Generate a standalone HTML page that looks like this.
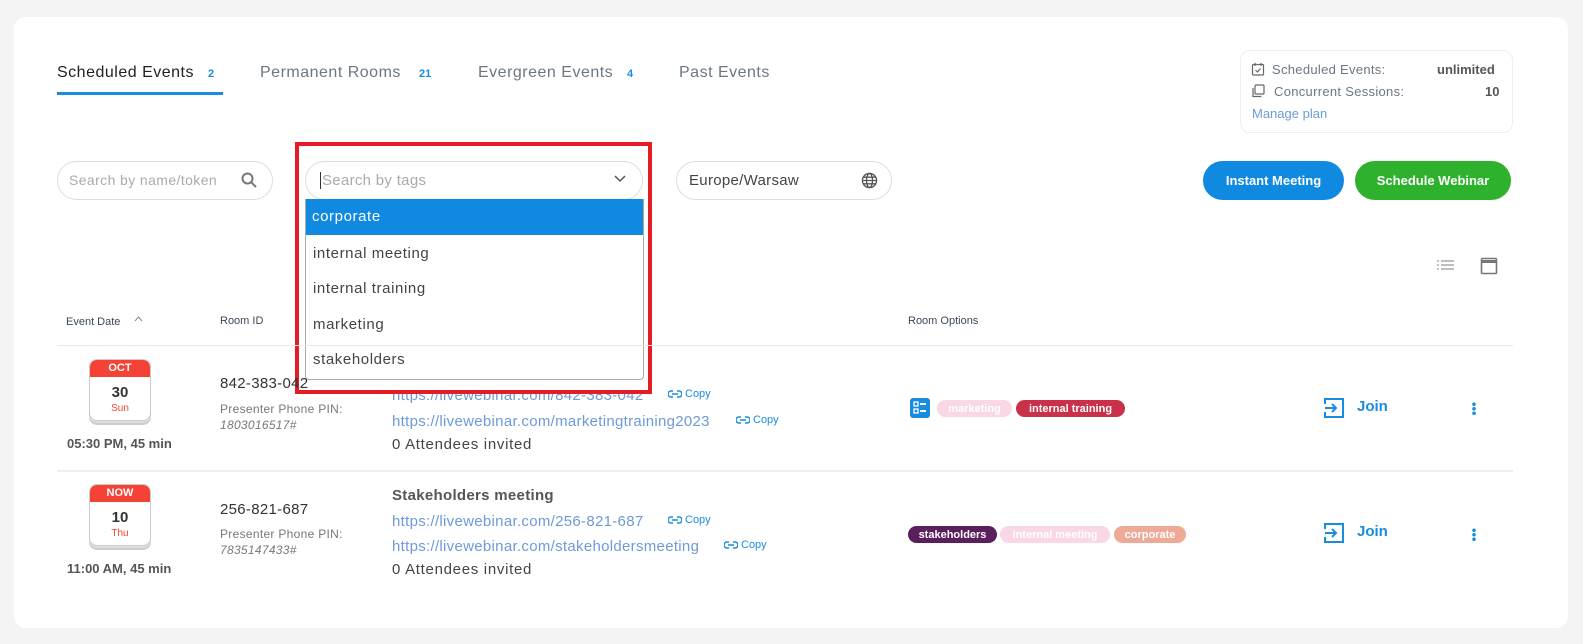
<!DOCTYPE html><html><head><style>
*{box-sizing:border-box;margin:0;padding:0}
body{width:1583px;height:644px;background:#f4f4f4;font-family:"Liberation Sans",sans-serif;position:relative;overflow:hidden;color:#3c4858}
.a{position:absolute;white-space:nowrap}
.card{position:absolute;left:14px;top:17px;width:1554px;height:611px;background:#fff;border-radius:12px}
.tab{font-size:16px;color:#6b7785;letter-spacing:.5px}
.cnt{font-size:11px;color:#1a8ce0;font-weight:bold}
.inp{position:absolute;height:39px;border:1px solid #ddd;border-radius:20px;background:#fff}
.btn{position:absolute;height:39px;border-radius:20px;color:#fff;font-weight:bold;font-size:13px;text-align:center;line-height:39px}
.hd{font-size:11px;color:#3c4858}
.link{font-size:15px;color:#6d9ad8;letter-spacing:.3px}
.copy{font-size:11px;color:#1a8ce0;display:flex;align-items:center;gap:3px}
.tag{position:absolute;height:17px;border-radius:9px;color:#fff;font-size:11px;font-weight:bold;display:flex;align-items:center;justify-content:center}
.cal{position:absolute;width:62px;height:62px;border:1px solid #ccc;border-radius:8px;background:#fff;box-shadow:0 2px 0 #ddd,0 4px 0 #ccc;overflow:hidden;text-align:center}
.cal .t{background:#f44336;color:#fff;font-size:11px;font-weight:bold;height:17px;line-height:17px}
.cal .d{font-size:15px;font-weight:bold;color:#333;margin-top:7px}
.cal .w{font-size:10px;color:#f44336;margin-top:2px}
.opt{position:absolute;left:307px;width:336px;height:36px;line-height:36px;padding-left:6px;font-size:15px;color:#444;letter-spacing:.6px}
.att{font-size:15px;color:#444;letter-spacing:.7px}
</style></head><body>
<div class="card"></div>
<div class="a tab" style="left:57px;top:64px;color:#222">Scheduled Events</div><div class="a cnt" style="left:208px;top:68px">2</div>
<div class="a" style="left:57px;top:92px;width:166px;height:3px;background:#1a8ce0"></div>
<div class="a tab" style="left:260px;top:64px">Permanent Rooms</div><div class="a cnt" style="left:419px;top:68px">21</div>
<div class="a tab" style="left:478px;top:64px">Evergreen Events</div><div class="a cnt" style="left:627px;top:68px">4</div>
<div class="a tab" style="left:679px;top:64px">Past Events</div>

<div class="a" style="left:1240px;top:50px;width:273px;height:83px;border:1px solid #eee;border-radius:10px"></div>
<svg class="a" style="left:1251px;top:62px" width="14" height="14" viewBox="0 0 14 14" fill="none" stroke="#666" stroke-width="1.2"><rect x="1.5" y="2.5" width="11" height="10.5" rx="1"/><path d="M4 1v3M10 1v3M4.5 8l2 2 3-3.5"/></svg>
<div class="a" style="left:1272px;top:62px;font-size:13px;color:#6b7785;letter-spacing:.3px">Scheduled Events:</div>
<div class="a" style="left:1437px;top:62px;font-size:13px;color:#555;font-weight:bold">unlimited</div>
<svg class="a" style="left:1251px;top:84px" width="14" height="14" viewBox="0 0 14 14" fill="none" stroke="#666" stroke-width="1.2"><rect x="4" y="1" width="9" height="9" rx="1"/><path d="M2 4v8.5h8.5"/></svg>
<div class="a" style="left:1274px;top:84px;font-size:13px;color:#6b7785;letter-spacing:.3px">Concurrent Sessions:</div>
<div class="a" style="left:1485px;top:84px;font-size:13px;color:#555;font-weight:bold">10</div>
<div class="a" style="left:1252px;top:106px;font-size:13px;color:#6d9ad8">Manage plan</div>

<div class="inp" style="left:57px;top:161px;width:216px"></div>
<div class="a" style="left:69px;top:172px;font-size:14px;color:#aaa;width:160px;overflow:hidden;letter-spacing:.4px">Search by name/token</div>
<svg class="a" style="left:240px;top:171px" width="18" height="18" viewBox="0 0 18 18" fill="none" stroke="#777" stroke-width="2"><circle cx="7.5" cy="7.5" r="5"/><path d="M11 11l5 5"/></svg>

<div class="inp" style="left:305px;top:161px;width:338px"></div>
<div class="a" style="left:320px;top:172px;font-size:15px;color:#aaa;border-left:1px solid #333;padding-left:1px;letter-spacing:.3px">Search by tags</div>
<svg class="a" style="left:613px;top:174px" width="14" height="10" viewBox="0 0 14 10" fill="none" stroke="#555" stroke-width="1.5"><path d="M2 2l5 5 5-5"/></svg>
<div class="a" style="left:305px;top:199px;width:339px;height:181px;border:1px solid #aaa;border-radius:0 0 4px 4px;background:#fff"></div>
<div class="opt" style="top:199px;left:306px;width:337px;background:#0f8ae0;color:#fff">corporate</div>
<div class="opt" style="top:236px">internal meeting</div>
<div class="opt" style="top:271px">internal training</div>
<div class="opt" style="top:307px">marketing</div>
<div class="opt" style="top:342px">stakeholders</div>
<div class="a" style="left:295px;top:142px;width:357px;height:252px;border:4px solid #e51c23"></div>

<div class="inp" style="left:676px;top:161px;width:216px"></div>
<div class="a" style="left:689px;top:172px;font-size:15px;color:#444;letter-spacing:.3px">Europe/Warsaw</div>
<svg class="a" style="left:861px;top:172px" width="17" height="17" viewBox="0 0 18 18" fill="none" stroke="#555" stroke-width="1.4"><circle cx="9" cy="9" r="7.5"/><ellipse cx="9" cy="9" rx="3.2" ry="7.5"/><path d="M1.5 9h15M2.5 5.5h13M2.5 12.5h13"/></svg>

<div class="btn" style="left:1203px;top:161px;width:141px;background:#0f8ae0">Instant Meeting</div>
<div class="btn" style="left:1355px;top:161px;width:156px;background:#2eb22e">Schedule Webinar</div>

<svg class="a" style="left:1437px;top:260px" width="17" height="10" viewBox="0 0 17 10" stroke="#999" stroke-width="1.2"><path d="M0 1h2M4 1h13M0 5h2M4 5h13M0 9h2M4 9h13"/></svg>
<svg class="a" style="left:1480px;top:256px" width="18" height="19" viewBox="0 0 18 19" fill="none" stroke="#777" stroke-width="1.6"><rect x="1.5" y="2.5" width="15" height="15" rx="1"/><path d="M1.5 5.5h15" stroke-width="3"/></svg>

<div class="a hd" style="left:66px;top:316px">Event Date</div>
<svg class="a" style="left:134px;top:316px" width="9" height="6"><path d="M1 5l3.5-4 3.5 4" fill="none" stroke="#888"/></svg>
<div class="a hd" style="left:220px;top:315px">Room ID</div>
<div class="a hd" style="left:908px;top:315px">Room Options</div>
<div class="a" style="left:57px;top:345px;width:1456px;height:1px;background:#e8e8e8"></div>
<div class="a" style="left:57px;top:470px;width:1456px;height:2px;background:#eee"></div>

<div class="cal" style="left:89px;top:359px"><div class="t">OCT</div><div class="d">30</div><div class="w">Sun</div></div>
<div class="a" style="left:67px;top:436px;font-size:13px;font-weight:bold;color:#555">05:30 PM, 45 min</div>
<div class="a" style="left:220px;top:375px;font-size:15px;color:#333;letter-spacing:.3px">842-383-042</div>
<div class="a" style="left:220px;top:402px;font-size:12px;color:#777;letter-spacing:.3px">Presenter Phone PIN:</div>
<div class="a" style="left:220px;top:418px;font-size:12px;color:#777;font-style:italic;letter-spacing:.3px">1803016517#</div>
<div class="a link" style="left:392px;top:387px;clip-path:inset(7px 0 0 0)">https://livewebinar.com/842-383-042</div>
<div class="a copy" style="left:668px;top:388px"><svg width="14" height="8" viewBox="0 0 14 8" fill="none" stroke="#1a8ce0" stroke-width="1.5"><path d="M5 1H3a3 3 0 000 6h2M9 1h2a3 3 0 010 6H9M4 4h6"/></svg>Copy</div>
<div class="a link" style="left:392px;top:413px">https://livewebinar.com/marketingtraining2023</div>
<div class="a copy" style="left:736px;top:414px"><svg width="14" height="8" viewBox="0 0 14 8" fill="none" stroke="#1a8ce0" stroke-width="1.5"><path d="M5 1H3a3 3 0 000 6h2M9 1h2a3 3 0 010 6H9M4 4h6"/></svg>Copy</div>
<div class="a att" style="left:392px;top:436px">0 Attendees invited</div>
<svg class="a" style="left:910px;top:398px" width="20" height="20" viewBox="0 0 20 20"><rect width="20" height="20" rx="3" fill="#1a8ce0"/><g fill="none" stroke="#fff" stroke-width="1.3"><rect x="4" y="4" width="4" height="4"/><rect x="4" y="11" width="4" height="4"/></g><path d="M10 6h6M10 13h6" stroke="#fff" stroke-width="2"/></svg>
<div class="tag" style="left:937px;top:400px;width:75px;background:#f9d7e6">marketing</div>
<div class="tag" style="left:1016px;top:400px;width:109px;background:#c9304a">internal training</div>
<svg class="a" style="left:1323px;top:397px" width="22" height="22" viewBox="0 0 22 22" fill="none" stroke="#1a8ce0" stroke-width="2"><path d="M2 7V2h18v18H2v-5M2 11h11M9 7l4 4-4 4"/></svg>
<div class="a" style="left:1357px;top:398px;font-size:15px;font-weight:bold;color:#1a8ce0">Join</div>
<div class="a" style="left:1472px;top:402px;width:4px;height:13px;background:radial-gradient(circle,#1a8ce0 1.6px,transparent 2px) 0 0/4px 4.5px"></div>

<div class="cal" style="left:89px;top:484px"><div class="t">NOW</div><div class="d">10</div><div class="w">Thu</div></div>
<div class="a" style="left:67px;top:561px;font-size:13px;font-weight:bold;color:#555">11:00 AM, 45 min</div>
<div class="a" style="left:220px;top:501px;font-size:15px;color:#333;letter-spacing:.3px">256-821-687</div>
<div class="a" style="left:220px;top:527px;font-size:12px;color:#777;letter-spacing:.3px">Presenter Phone PIN:</div>
<div class="a" style="left:220px;top:543px;font-size:12px;color:#777;font-style:italic;letter-spacing:.3px">7835147433#</div>
<div class="a" style="left:392px;top:487px;font-size:15px;font-weight:bold;color:#555;letter-spacing:.3px">Stakeholders meeting</div>
<div class="a link" style="left:392px;top:513px">https://livewebinar.com/256-821-687</div>
<div class="a copy" style="left:668px;top:514px"><svg width="14" height="8" viewBox="0 0 14 8" fill="none" stroke="#1a8ce0" stroke-width="1.5"><path d="M5 1H3a3 3 0 000 6h2M9 1h2a3 3 0 010 6H9M4 4h6"/></svg>Copy</div>
<div class="a link" style="left:392px;top:538px">https://livewebinar.com/stakeholdersmeeting</div>
<div class="a copy" style="left:724px;top:539px"><svg width="14" height="8" viewBox="0 0 14 8" fill="none" stroke="#1a8ce0" stroke-width="1.5"><path d="M5 1H3a3 3 0 000 6h2M9 1h2a3 3 0 010 6H9M4 4h6"/></svg>Copy</div>
<div class="a att" style="left:392px;top:561px">0 Attendees invited</div>
<div class="tag" style="left:908px;top:526px;width:89px;background:#5c1f5e">stakeholders</div>
<div class="tag" style="left:1000px;top:526px;width:110px;background:#f9d7e6">internal meeting</div>
<div class="tag" style="left:1114px;top:526px;width:72px;background:#eeaa96">corporate</div>
<svg class="a" style="left:1323px;top:522px" width="22" height="22" viewBox="0 0 22 22" fill="none" stroke="#1a8ce0" stroke-width="2"><path d="M2 7V2h18v18H2v-5M2 11h11M9 7l4 4-4 4"/></svg>
<div class="a" style="left:1357px;top:523px;font-size:15px;font-weight:bold;color:#1a8ce0">Join</div>
<div class="a" style="left:1472px;top:528px;width:4px;height:13px;background:radial-gradient(circle,#1a8ce0 1.6px,transparent 2px) 0 0/4px 4.5px"></div>
</body></html>
